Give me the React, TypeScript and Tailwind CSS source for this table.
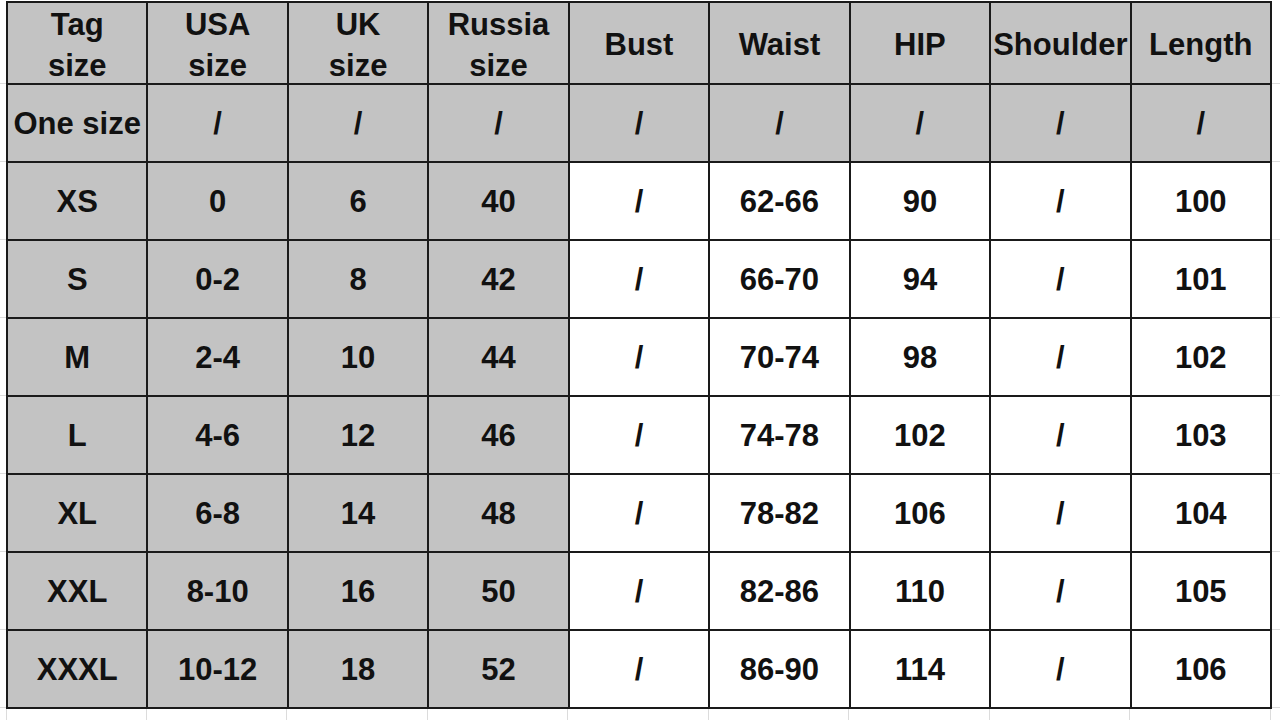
const HEADERS = [
  ['Tag', 'size'],
  ['USA', 'size'],
  ['UK', 'size'],
  ['Russia', 'size'],
  ['Bust'],
  ['Waist'],
  ['HIP'],
  ['Shoulder'],
  ['Length'],
];

const ROWS = [
  ['One size', '/', '/', '/', '/', '/', '/', '/', '/'],
  ['XS', '0', '6', '40', '/', '62-66', '90', '/', '100'],
  ['S', '0-2', '8', '42', '/', '66-70', '94', '/', '101'],
  ['M', '2-4', '10', '44', '/', '70-74', '98', '/', '102'],
  ['L', '4-6', '12', '46', '/', '74-78', '102', '/', '103'],
  ['XL', '6-8', '14', '48', '/', '78-82', '106', '/', '104'],
  ['XXL', '8-10', '16', '50', '/', '82-86', '110', '/', '105'],
  ['XXXL', '10-12', '18', '52', '/', '86-90', '114', '/', '106'],
];

export default function App() {
  return (
    <div
      className="h-[720px] w-[1280px] overflow-hidden bg-white text-[#111]"
      style={{ fontFamily: '"Liberation Sans", Arial, sans-serif' }}
    >
      <div className="flex pt-[1px]">
        {/* left gutter with faint sheet lines */}
        <div className="flex w-[6px] flex-col">
          <div className="h-[83px] border-b border-[#dcdcdc]" />
          {ROWS.map((_, i) => (
            <div key={i} className="h-[78px] border-b border-[#dcdcdc]" />
          ))}
        </div>

        {/* size table */}
        <div className="grid flex-1 grid-cols-[repeat(9,1fr)] gap-[2px] bg-[#1a1a1a] p-[2px]">
          {HEADERS.map((h, i) => (
            <div
              key={i}
              className={`flex h-[80px] flex-col items-center justify-center overflow-hidden whitespace-nowrap bg-[#c3c3c3] text-[31px] font-bold leading-[41px] ${
                h.length > 1 ? 'pt-[3px]' : 'pt-[2px]'
              }`}
            >
              {h.map((line) => (
                <span key={line}>{line}</span>
              ))}
            </div>
          ))}
          {ROWS.map((row, r) =>
            row.map((cell, c) => (
              <div
                key={`${r}-${c}`}
                className={`flex h-[76px] items-center justify-center whitespace-nowrap pt-[3px] text-[31px] font-bold ${
                  r === 0 || c < 4 ? 'bg-[#c3c3c3]' : 'bg-white'
                }`}
              >
                {cell}
              </div>
            ))
          )}
        </div>

        {/* right gutter */}
        <div className="flex w-[8px] flex-col">
          <div className="h-[83px] border-b border-[#dcdcdc]" />
          {ROWS.map((_, i) => (
            <div key={i} className="h-[78px] border-b border-[#dcdcdc]" />
          ))}
        </div>
      </div>

      {/* faint sheet lines below the table */}
      <div className="flex h-[12px]">
        <div className="w-[7px] border-r border-[#dcdcdc]" />
        <div className="grid flex-1 grid-cols-[repeat(9,1fr)] gap-[2px] px-[1px]">
          {HEADERS.map((_, i) => (
            <div key={i} className="border-r border-[#dcdcdc]" />
          ))}
        </div>
        <div className="w-[8px]" />
      </div>
    </div>
  );
}
